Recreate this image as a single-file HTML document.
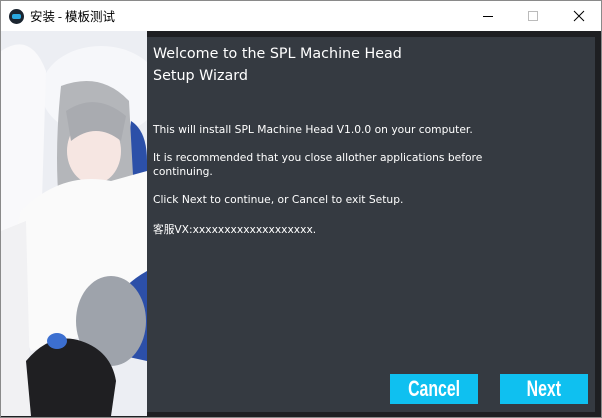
<!DOCTYPE html>
<html><head><meta charset="utf-8"><style>
*{margin:0;padding:0;box-sizing:border-box}
body{width:602px;height:418px;overflow:hidden;background:#fff;font-family:"Liberation Sans","Noto Sans CJK SC",sans-serif;position:relative}
.title{position:absolute;left:0;top:0;width:602px;height:31px;background:#fff;border:1px solid #8a8a8a;border-bottom:none}
.title span{position:absolute;left:29px;top:7px;font-size:12.5px;color:#000;font-family:"Noto Sans CJK SC",sans-serif;line-height:16px}
.frame{position:absolute;left:0;top:31px;width:602px;height:387px;background:#1e1f22;border:1px solid #8a8a8a;border-top:none}
.img{position:absolute;left:1px;top:31px;width:146px;height:385px;background:#eef0f4;overflow:hidden}
.panel{position:absolute;left:147px;top:37px;width:448px;height:375px;background:#353a41;color:#fff}
.h{position:absolute;left:6px;top:6px;line-height:22px;font-family:"DejaVu Sans",sans-serif;font-size:14.3px}
.p{position:absolute;left:6px;font-size:10.7px;font-family:"DejaVu Sans","Noto Sans CJK SC",sans-serif;line-height:14px;white-space:nowrap}
.btn{position:absolute;top:337px;width:88px;height:30px;background:#0fc0f0;color:#fff;font:bold 22px "Liberation Sans Narrow","Liberation Sans",sans-serif;text-align:center;line-height:30px}
</style></head><body>
<div class="title">
<svg style="position:absolute;left:8px;top:8px" width="15" height="15"><circle cx="7.5" cy="7.5" r="7.5" fill="#1b2530"/><rect x="3" y="5" width="9" height="5" rx="2" fill="#2aa8e0"/></svg>
<span>安装 - 模板测试</span>
<div style="position:absolute;left:482px;top:15px;width:10px;height:1px;background:#000"></div>
<div style="position:absolute;left:527px;top:10px;width:10px;height:10px;border:1px solid #bbb"></div>
<svg style="position:absolute;left:572px;top:9px" width="12" height="12"><path d="M1 1L11 11M11 1L1 11" stroke="#000" stroke-width="1"/></svg>
</div>
<div class="frame"></div>
<div class="img">
<svg width="146" height="385">
<rect width="146" height="385" fill="#eceef3"/>
<ellipse cx="100" cy="60" rx="60" ry="45" fill="#f6f7fa"/>
<path d="M0 20 Q30 0 45 40 L40 200 L0 220Z" fill="#f9f9fb"/>
<path d="M90 240 Q140 190 146 230 L146 330 L100 320Z" fill="#2c4fa8"/>
<path d="M130 90 Q146 100 146 130 L146 200 L120 190Z" fill="#2c50a8"/>
<path d="M60 55 Q100 40 128 70 L135 200 Q110 230 95 210 L65 220 Q50 150 60 55Z" fill="#b4b6ba"/>
<ellipse cx="93" cy="120" rx="27" ry="33" fill="#f6e6e2"/>
<path d="M65 80 Q95 60 125 85 L120 110 Q95 90 70 110Z" fill="#a9abb0"/>
<path d="M20 180 Q60 140 110 150 L146 140 L146 240 Q110 260 100 300 L30 320 Q0 260 20 180Z" fill="#fafafa"/>
<path d="M0 200 L25 190 L30 385 L0 385Z" fill="#f1f1f3"/>
<ellipse cx="110" cy="290" rx="35" ry="45" fill="#9ea3ab"/>
<path d="M25 330 Q50 300 80 310 Q110 320 115 350 L110 385 L30 385Z" fill="#1f1f22"/>
<ellipse cx="56" cy="310" rx="10" ry="8" fill="#3c6fd0"/>
</svg>
</div>
<div class="panel">
<div class="h">Welcome to the SPL Machine Head<br>Setup Wizard</div>
<div class="p" style="top:86px">This will install SPL Machine Head V1.0.0 on your computer.</div>
<div class="p" style="top:114px">It is recommended that you close allother applications before<br>continuing.</div>
<div class="p" style="top:156px">Click Next to continue, or Cancel to exit Setup.</div>
<div class="p" style="top:186px">客服VX:xxxxxxxxxxxxxxxxxxx.</div>
<div class="btn" style="left:243px"><span style="display:inline-block;transform:scaleX(0.72)">Cancel</span></div>
<div class="btn" style="left:353px"><span style="display:inline-block;transform:scaleX(0.72)">Next</span></div>
</div>
</body></html>
